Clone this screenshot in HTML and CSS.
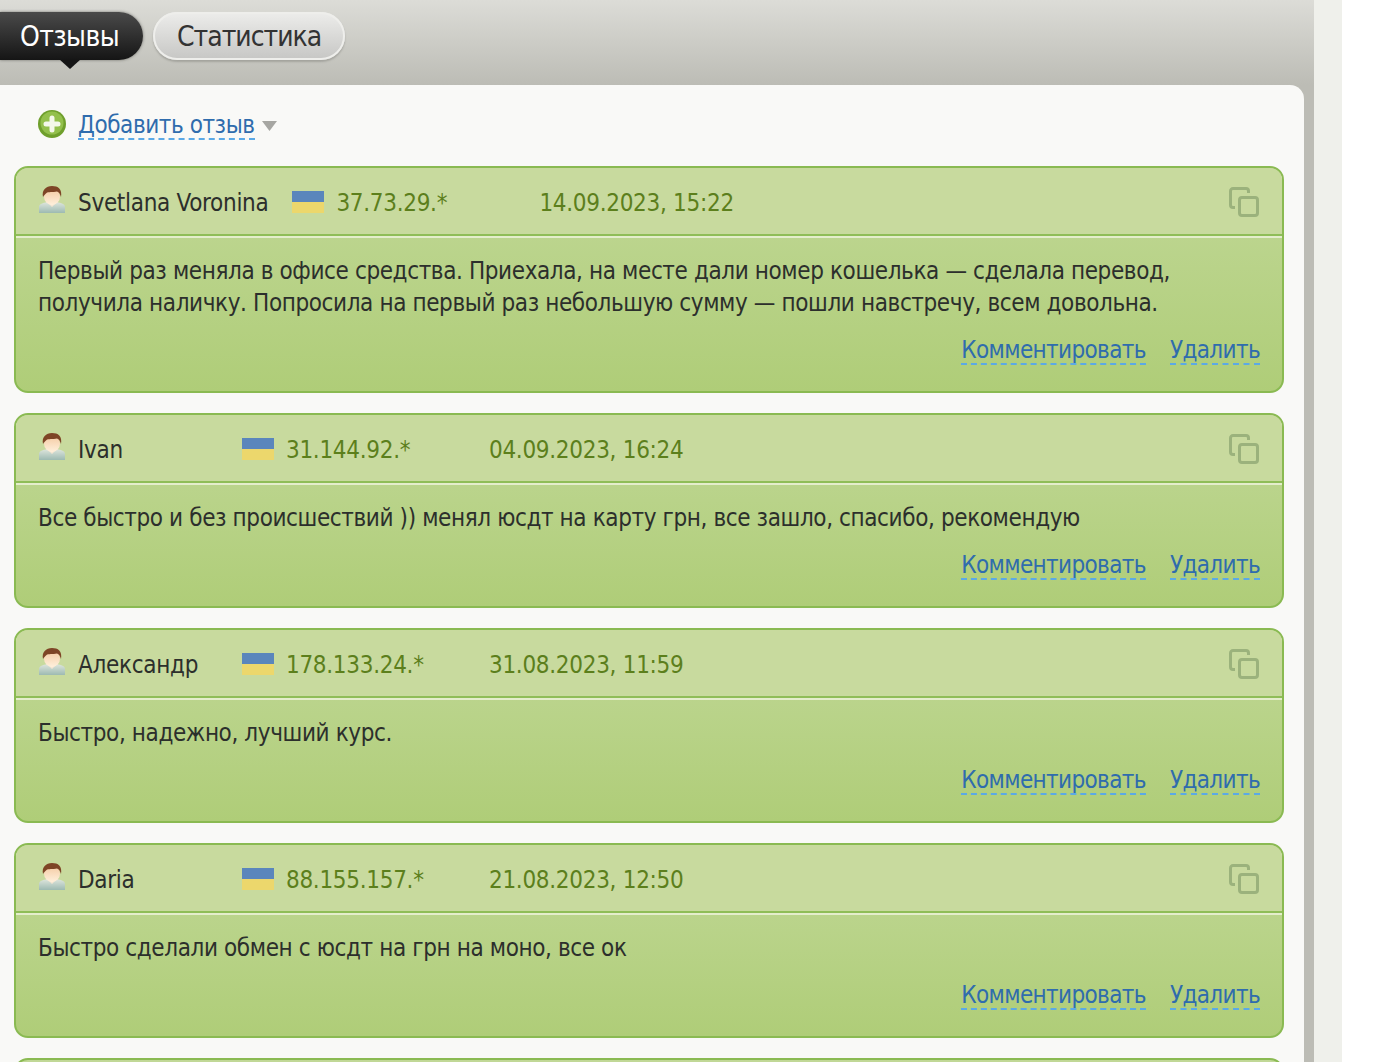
FILE: index.html
```html
<!DOCTYPE html>
<html lang="ru">
<head>
<meta charset="utf-8">
<title>Отзывы</title>
<link rel="stylesheet" href="styles.css">
</head>
<body>
<svg class="defs" width="0" height="0" aria-hidden="true">
  <defs>
    <linearGradient id="skin" x1="0" y1="0" x2="0" y2="1"><stop offset="0" stop-color="#f4c9a0"/><stop offset="1" stop-color="#fff0dc"/></linearGradient>
    <linearGradient id="shirt" x1="0" y1="0" x2="0" y2="1"><stop offset="0" stop-color="#dfe6dd"/><stop offset="1" stop-color="#9dbab2"/></linearGradient>
    <filter id="soft" x="-10%" y="-10%" width="120%" height="120%"><feGaussianBlur stdDeviation="0.6"/></filter>
    <symbol id="user" viewBox="0 0 28 28">
      <g filter="url(#soft)">
        <path d="M1 27v-6c0-3 4-4 8-5h10c4 1 8 2 8 5v6z" fill="url(#shirt)"/>
        <path d="M9 16l5 5 5-5z" fill="#f6e6d2"/>
        <ellipse cx="14" cy="10.500" rx="8" ry="8.500" fill="url(#skin)"/>
        <path d="M5 11C3.500 4 8 0 14 0c6 0 10.500 3 9 11-1-3-2-5-4-5.500-4 1-9 0-10.500 1.500-1 1-2.500 2-3.500 4z" fill="#7e4526"/>
      </g>
    </symbol>
    <symbol id="copy" viewBox="0 0 30 30">
      <rect x="10.500" y="10.500" width="18" height="18" rx="2.500" fill="none" stroke="currentColor" stroke-width="3"/>
      <path d="M6 20.500H4A2.500 2.500 0 0 1 1.500 18V4A2.500 2.500 0 0 1 4 1.500h13A2.500 2.500 0 0 1 19.500 4v2" fill="none" stroke="currentColor" stroke-width="3"/>
    </symbol>
  </defs>
</svg>
<div class="page">
  <main class="shell">
    <nav class="tabs">
      <a class="tab tab-active">Отзывы</a>
      <a class="tab">Статистика</a>
    </nav>
    <section class="panel">
      <div class="add-row">
        <svg class="plus" width="28" height="28" viewBox="0 0 28 28" aria-hidden="true">
          <circle cx="14" cy="14" r="14" fill="#6f9f2c"/>
          <circle cx="14" cy="13" r="11.500" fill="#93c04c"/>
          <path d="M14 8v12M8 14h12" stroke="#f4f8ea" stroke-width="5" stroke-linecap="round"/>
        </svg>
        <a class="link add-link">Добавить отзыв</a>
        <svg class="caret" width="15" height="10" viewBox="0 0 15 10" aria-hidden="true"><path d="M0 0h15l-7.500 10z" fill="#a6a6a2"/></svg>
      </div>

      <article class="card">
        <header class="card-head">
          <svg class="avatar" aria-hidden="true"><use href="#user"/></svg>
          <span class="name">Svetlana Voronina</span>
          <span class="geo"><i class="flag"></i><span class="ip">37.73.29.*</span></span>
          <time class="date">14.09.2023, 15:22</time>
          <svg class="copy" aria-hidden="true"><use href="#copy"/></svg>
        </header>
        <p class="text">Первый раз меняла в офисе средства. Приехала, на месте дали номер кошелька — сделала перевод, получила наличку. Попросила на первый раз небольшую сумму — пошли навстречу, всем довольна.</p>
        <footer class="actions"><a class="link">Комментировать</a><a class="link">Удалить</a></footer>
      </article>

      <article class="card">
        <header class="card-head">
          <svg class="avatar" aria-hidden="true"><use href="#user"/></svg>
          <span class="name">Ivan</span>
          <span class="geo"><i class="flag"></i><span class="ip">31.144.92.*</span></span>
          <time class="date">04.09.2023, 16:24</time>
          <svg class="copy" aria-hidden="true"><use href="#copy"/></svg>
        </header>
        <p class="text">Все быстро и без происшествий )) менял юсдт на карту грн, все зашло, спасибо, рекомендую</p>
        <footer class="actions"><a class="link">Комментировать</a><a class="link">Удалить</a></footer>
      </article>

      <article class="card">
        <header class="card-head">
          <svg class="avatar" aria-hidden="true"><use href="#user"/></svg>
          <span class="name">Александр</span>
          <span class="geo"><i class="flag"></i><span class="ip">178.133.24.*</span></span>
          <time class="date">31.08.2023, 11:59</time>
          <svg class="copy" aria-hidden="true"><use href="#copy"/></svg>
        </header>
        <p class="text">Быстро, надежно, лучший курс.</p>
        <footer class="actions"><a class="link">Комментировать</a><a class="link">Удалить</a></footer>
      </article>

      <article class="card">
        <header class="card-head">
          <svg class="avatar" aria-hidden="true"><use href="#user"/></svg>
          <span class="name">Daria</span>
          <span class="geo"><i class="flag"></i><span class="ip">88.155.157.*</span></span>
          <time class="date">21.08.2023, 12:50</time>
          <svg class="copy" aria-hidden="true"><use href="#copy"/></svg>
        </header>
        <p class="text">Быстро сделали обмен с юсдт на грн на моно, все ок</p>
        <footer class="actions"><a class="link">Комментировать</a><a class="link">Удалить</a></footer>
      </article>

      <article class="card"></article>
    </section>
  </main>
  <aside class="strip"></aside>
</div>
</body>
</html>
```
FILE: styles.css
```css
html, body {
  margin: 0;
  height: 1062px;
  overflow: hidden;
  background: #fff;
}
body {
  font-family: "DejaVu Sans", "Noto Sans", sans-serif;
  font-stretch: condensed;
  font-size: 24px;
  color: #2c2f2c;
}
.defs { display: block; height: 0; }
.page {
  display: flex;
  width: 1342px;
  height: 1062px;
  background: #eff0eb;
}
.shell {
  width: 1314px;
  height: 1062px;
  overflow: hidden;
  background: linear-gradient(#dcdcd7 0, #bcbcb5 85px);
}
.strip { width: 28px; }

.tabs {
  display: flex;
  gap: 10px;
  height: 73px;
  padding-top: 12px;
  box-sizing: border-box;
}
.tab {
  position: relative;
  display: flex;
  align-items: center;
  height: 48px;
  padding: 0 24px;
  box-sizing: border-box;
  border-radius: 24px;
  font-size: 28px;
  letter-spacing: -1px;
  color: #333;
  background: linear-gradient(#ededeb, #c6c6c4);
  box-shadow: inset 0 0 0 2px #eeeeeb, 0 2px 2px #a4a49e;
}
.tab-active {
  width: 143px;
  padding-left: 20px;
  border-radius: 0 24px 24px 0;
  letter-spacing: -.6px;
  color: #fff;
  background: linear-gradient(#4a4a4a, #151515);
  box-shadow: 0 0 3px rgba(70, 70, 65, .7);
}
.tab-active::after {
  content: "";
  position: absolute;
  left: 59px;
  bottom: -9px;
  border: 11px solid transparent;
  border-bottom: 0;
  border-top: 10px solid #151515;
}

.panel {
  width: 1304px;
  height: 977px;
  margin-top: 12px;
  padding: 24px 20px 0 14px;
  box-sizing: border-box;
  background: #f9f9f7;
  border-radius: 0 14px 0 0;
}
.add-row {
  display: flex;
  align-items: center;
  height: 30px;
  margin-bottom: 27px;
  padding-left: 24px;
}
.plus { margin-right: 12px; }
.caret { margin: 4px 0 0 7px; }

.link {
  color: #2f6cad;
  line-height: 26px;
  letter-spacing: -.62px;
  border-bottom: 2px dashed #5ba9e6;
}
.add-link { margin-top: 4px; letter-spacing: -.43px; }

.card {
  min-height: 195px;
  margin-bottom: 20px;
  box-sizing: border-box;
  border: 2px solid #8aba52;
  border-radius: 14px;
  background: linear-gradient(#c1d897, #afcd78);
  overflow: hidden;
}
.card-head {
  display: flex;
  align-items: center;
  height: 68px;
  padding: 4px 22px 0;
  box-sizing: border-box;
  background: #c8da9e;
  border-bottom: 2px solid #8fbd58;
  box-shadow: 0 2px 0 #e4edcc;
  letter-spacing: -.3px;
}
.avatar { width: 28px; height: 28px; margin: -6px 12px 0 0; }
.name { min-width: 140px; margin-right: 24px; }
.geo { display: flex; align-items: center; width: 247px; flex: none; }
.flag {
  width: 32px;
  height: 22px;
  margin: -2px 12px 0 0;
  background: linear-gradient(#5a86bc 0 50%, #ecd76c 50% 100%);
}
.ip, .date { color: #5c7f1c; }
.copy {
  width: 30px;
  height: 30px;
  margin: -2px 1px 0 auto;
  color: #9bb27c;
}

.text {
  margin: 19px 22px 0;
  line-height: 32px;
  letter-spacing: -.39px;
}
.actions {
  display: flex;
  justify-content: flex-end;
  gap: 24px;
  margin: 18px 22px 26px;
}
```
